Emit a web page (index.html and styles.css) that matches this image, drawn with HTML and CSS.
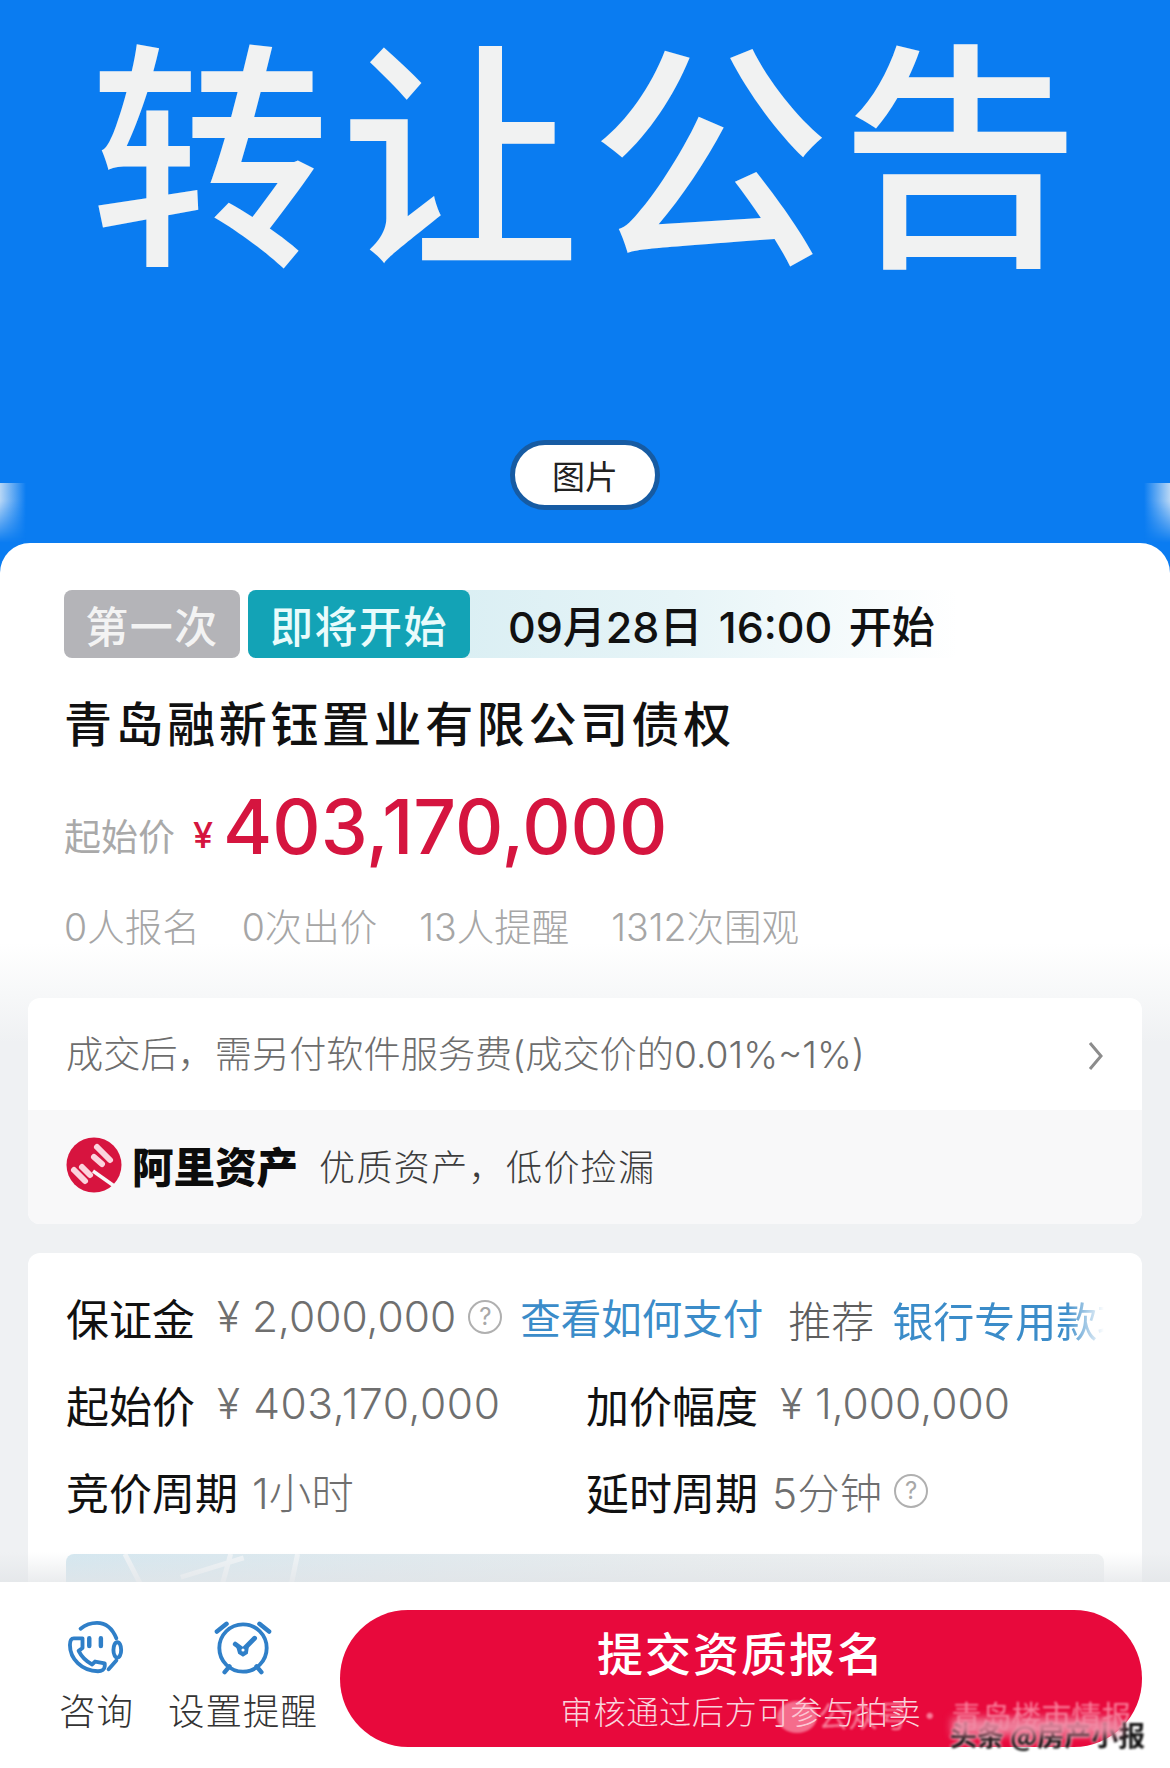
FILE: index.html
```html
<!DOCTYPE html>
<html lang="zh">
<head>
<meta charset="utf-8">
<title>转让公告</title>
<link rel="stylesheet" href="styles.css">
</head>
<body>
<div class="page">
  <main class="scroll">
    <header class="hero">
      <h1 class="hero-title"><span>转</span><span>让</span><span>公</span><span>告</span></h1>
      <div class="hero-pill">图片</div>
    </header>
    <section class="card">
      <div class="summary">
        <div class="tags">
          <span class="tag tag-grey">第一次</span>
          <div class="tag-strip">
            <span class="tag tag-teal">即将开始</span>
            <span class="tag-date">09月28日 16:00 开始</span>
          </div>
        </div>
        <h2 class="asset-title">青岛融新钰置业有限公司债权</h2>
        <div class="price-row">
          <span class="price-label">起始价</span>
          <span class="price-yen">¥</span>
          <span class="price-num">403,170,000</span>
        </div>
        <div class="stats">
          <span>0人报名</span><span>0次出价</span><span>13人提醒</span><span>1312次围观</span>
        </div>
      </div>
      <div class="panel notice">
        <div class="notice-top">
          <span>成交后，需另付软件服务费(成交价的0.01%~1%)</span>
          <svg class="chevron" viewBox="0 0 16 32"><path d="M2 3l11 13L2 29"/></svg>
        </div>
        <div class="notice-bottom">
          <svg class="ali-logo" viewBox="0 0 56 56">
            <circle cx="28" cy="28" r="27.5" fill="#d7143f"/>
            <g class="ali-bars">
              <path d="M31 10l13 13"/><path d="M28 20l8 7"/><path d="M16 30l8 8"/><path d="M8 33l11 11"/>
            </g>
            <path d="M27 34l24 17" class="ali-line"/>
          </svg>
          <strong class="ali-name">阿里资产</strong>
          <span class="ali-slogan">优质资产，低价捡漏</span>
        </div>
      </div>
      <div class="panel rules">
        <div class="rule-row">
          <span class="k">保证金</span>
          <span class="v yen-gap">¥ 2,000,000</span>
          <span class="qmark">?</span>
          <span class="link">查看如何支付</span>
          <span class="rec">推荐</span>
          <span class="link bank">银行专用款项</span>
        </div>
        <div class="rule-row">
          <div class="col col-a"><span class="k">起始价</span><span class="v yen-gap wide">¥ 403,170,000</span></div>
          <div class="col"><span class="k">加价幅度</span><span class="v yen-gap">¥ 1,000,000</span></div>
        </div>
        <div class="rule-row">
          <div class="col col-a"><span class="k">竞价周期</span><span class="v">1小时</span></div>
          <div class="col"><span class="k">延时周期</span><span class="v">5分钟</span><span class="qmark">?</span></div>
        </div>
        <div class="map">
          <svg class="map-roads" viewBox="0 0 1040 30" preserveAspectRatio="none">
            <path d="M59 0l15 30M115 24L178 4M165 0l-8 30M232 0l-6 30"/>
          </svg>
        </div>
      </div>
    </section>
  </main>
  <footer class="bar">
    <div class="bar-item">
      <svg class="bar-icon" viewBox="0 0 60 60">
        <path d="M15 20H6C3 20 2 23 2 27C2 41 14 54 31 54C35 54 38 52 38 49V46L28 44L25 47C19 44 14 39 11 33L15 30Z"/>
        <path d="M13 10C18 6 24 4 30 4C39 4 46 10 50 20"/>
        <ellipse cx="51" cy="32" rx="4" ry="8"/>
        <path d="M50 43L42 52"/>
        <path class="eyes" d="M22 20v8M34 20v8"/>
      </svg>
      <span>咨询</span>
    </div>
    <div class="bar-item">
      <svg class="bar-icon" viewBox="0 0 60 60">
        <circle cx="30" cy="30" r="24.5"/>
        <path class="eyes" d="M3 13l10-8M57 13L47 5M11 55l5-6M49 55l-5-6"/>
        <path class="hand" d="M22 26l8 6 12-12"/>
        <path class="hand-fill" d="M23 29l7 3 6-3-1 7-5 3-5-3z"/>
        <circle class="hand-dot" cx="30" cy="32" r="1.6"/>
      </svg>
      <span>设置提醒</span>
    </div>
    <button class="cta">
      <span class="cta-main">提交资质报名</span>
      <span class="cta-sub">审核通过后方可参与拍卖</span>
      <span class="wm-bubble"></span>
      <span class="wm wm-a">公众号 · 青岛楼市情报</span>
      <span class="wm wm-b">头条 @房产小报</span>
      <span class="wm-smear"></span>
    </button>
  </footer>
</div>
</body>
</html>
```
FILE: styles.css
```css
* { box-sizing: border-box; }
html, body { margin: 0; padding: 0; }
body {
  width: 1170px;
  height: 1768px;
  overflow: hidden;
  background: #fff;
  font-family: Inter, "Noto Sans CJK SC", sans-serif;
}
.page { width: 1170px; height: 1768px; display: flex; flex-direction: column; }
.scroll { height: 1582px; overflow: hidden; flex: none; }

.hero {
  position: relative;
  height: 573px;
  margin-bottom: -30px;
  background: #0a7cf1;
  display: flex;
  flex-direction: column;
  align-items: center;
  padding-top: 3px;
}
.hero::before, .hero::after {
  content: "";
  position: absolute;
  top: 483px;
  height: 60px;
  width: 26px;
  -webkit-mask-image: linear-gradient(180deg, #000 30%, transparent 100%);
  mask-image: linear-gradient(180deg, #000 30%, transparent 100%);
}
.hero::before { left: 0; background: linear-gradient(90deg, #b7d6f5, #0a7cf1); }
.hero::after { right: 0; background: linear-gradient(270deg, #b7d6f5, #0a7cf1); }
.hero-title {
  margin: 0;
  width: 990px;
  height: 293px;
  display: flex;
  justify-content: space-between;
  font-family: "Noto Sans CJK SC", sans-serif;
  font-weight: 500;
  font-size: 240px;
  line-height: 280px;
  color: #f1f2f2;
}
.hero-title span { display: block; width: 240px; }
.hero-pill {
  margin-top: 144px;
  width: 150px;
  height: 70px;
  border: 5px solid #165ba3;
  border-radius: 35px;
  background: #fff;
  color: #222;
  font-family: "Noto Sans CJK SC", sans-serif;
  font-size: 33px;
  line-height: 60px;
  text-align: center;
}

.card {
  position: relative;
  height: 1039px;
  border-radius: 30px 30px 0 0;
  background: linear-gradient(180deg, #fff 0, #fff 400px, #eff1f3 500px, #eff1f3 100%);
  padding: 47px 28px 0;
}
.summary { padding: 0 36px; height: 408px; }
.tags { display: flex; gap: 8px; height: 68px; }
.tag {
  display: flex;
  align-items: center;
  justify-content: center;
  height: 68px;
  border-radius: 8px;
  color: #e9fbfb;
  font-size: 43px;
  font-weight: 500;
  letter-spacing: 1.5px;
  font-family: "Noto Sans CJK SC", sans-serif;
}
.tag-grey { width: 176px; background: #b4b4b8; color: #f3f3f3; }
.tag-strip {
  display: flex;
  align-items: center;
  width: 710px;
  height: 68px;
  background: linear-gradient(90deg, #cfeaf0 0, #e6f4f7 60%, #fff 100%);
  border-radius: 8px;
}
.tag-teal { width: 222px; background: #13a3b6; flex: none; }
.tag-date {
  margin-left: 38px;
  font-size: 43px;
  font-weight: 500;
  color: #111;
  white-space: nowrap;
  word-spacing: 5px;
}
.asset-title {
  margin: 28px 0 0;
  font-size: 48px;
  font-weight: 500;
  line-height: 70px;
  letter-spacing: 3.6px;
  color: #111;
  font-family: "Noto Sans CJK SC", sans-serif;
}
.price-row { display: flex; align-items: flex-end; height: 100px; margin-top: 21px; }
.price-label { margin-bottom: 17px; font-size: 37px; line-height: 50px; color: #a9a9a9; font-family: "Noto Sans CJK SC", sans-serif; }
.price-yen { margin: 0 0 17px 18px; font-size: 36px; line-height: 50px; font-weight: 500; color: #d5153f; }
.price-num { margin-left: 10px; font-size: 75px; line-height: 100px; font-weight: 500; color: #d5153f; }
.stats {
  display: flex;
  gap: 42px;
  margin-top: 20px;
  font-size: 37.5px;
  font-weight: 300;
  color: #a6a6a6;
}

.panel { border-radius: 12px; background: #fff; overflow: hidden; }
.notice { height: 226px; }
.notice-top {
  height: 112px;
  padding: 0 38px 4px;
  display: flex;
  align-items: center;
  justify-content: space-between;
  font-size: 37.2px;
  font-weight: 300;
  color: #6d6d6d;
  white-space: nowrap;
}
.chevron { width: 16px; height: 32px; margin-top: 7px; fill: none; stroke: #8c8c8c; stroke-width: 3; }
.notice-bottom {
  height: 114px;
  padding: 0 0 4px 38px;
  background: #f8f8f9;
  display: flex;
  align-items: center;
}
.ali-logo { width: 56px; height: 56px; flex: none; }
.ali-bars path { stroke: #fbd3dd; stroke-width: 6; stroke-linecap: round; fill: none; }
.ali-line { stroke: #f8f8f9; stroke-width: 3.5; fill: none; }
.ali-name {
  margin-left: 10px;
  font-size: 41.5px;
  font-weight: 900;
  color: #0c0c0c;
  font-family: "Noto Sans CJK SC", sans-serif;
}
.ali-slogan {
  margin-left: 21px;
  font-size: 36px;
  color: #3d3d3d;
  font-family: "Noto Sans CJK SC", sans-serif;
  font-weight: 300;
  letter-spacing: 1.4px;
}

.rules { margin-top: 29px; height: 400px; padding: 20px 38px 0; }
.rule-row {
  display: flex;
  align-items: center;
  height: 87px;
  white-space: nowrap;
  overflow: hidden;
}
.col { display: flex; align-items: center; }
.col-a { width: 520px; flex: none; }
.k { font-size: 43px; color: #111; font-family: "Noto Sans CJK SC", sans-serif; font-weight: 400; }
.v { margin-left: 14px; font-size: 42.5px; font-weight: 300; color: #6f6f6f; }
.wide { letter-spacing: 0.6px; }
.yen-gap { margin-left: 22px; }
.qmark {
  margin-left: 12px;
  width: 34px;
  height: 34px;
  border: 2px solid #b0b0b0;
  border-radius: 50%;
  color: #a8a8a8;
  font-size: 24px;
  line-height: 30px;
  text-align: center;
  flex: none;
}
.link { margin-left: 18px; font-size: 40.5px; font-weight: 400; color: #3b8cc9; font-family: "Noto Sans CJK SC", sans-serif; }
.rec { margin-left: 25px; font-size: 43px; line-height: 60px; padding-top: 5px; font-weight: 300; color: #5e5e5e; font-family: "Noto Sans CJK SC", sans-serif; }
.bank {
  margin-left: 18px;
  font-size: 41px;
  line-height: 60px;
  padding-top: 5px;
  flex: 1;
  overflow: hidden;
  -webkit-mask-image: linear-gradient(90deg, #000 82%, transparent 100%);
  mask-image: linear-gradient(90deg, #000 82%, transparent 100%);
}
.map {
  margin-top: 20px;
  height: 60px;
  border-radius: 8px 8px 0 0;
  background: linear-gradient(90deg, #d4e7f0 0, #dfe9ee 30%, #e9edef 60%, #f0f2f3 100%);
}
.map-roads { display: block; width: 100%; height: 29px; fill: none; stroke: #eef3f6; stroke-width: 5; }

.bar {
  flex: 1;
  display: flex;
  background: #fff;
  padding: 28px 28px 21px 59px;
  position: relative;
}
.bar::before {
  content: "";
  position: absolute;
  left: 0;
  right: 0;
  top: -30px;
  height: 30px;
  background: linear-gradient(180deg, rgba(225,228,231,0), rgba(225,228,231,.7));
}
.bar-item {
  display: flex;
  flex-direction: column;
  align-items: center;
  margin-right: 34px;
  font-size: 36.5px;
  color: #333;
  font-family: "Noto Sans CJK SC", sans-serif;
  font-weight: 300;
  letter-spacing: 1px;
  white-space: nowrap;
}
.bar-item + .bar-item { margin-right: 0; }
.bar-item span { margin-top: 7px; line-height: 52px; }
.bar-icon { width: 58px; height: 58px; margin-top: 9px; fill: none; stroke: #2f7fc8; stroke-width: 4; stroke-linecap: round; stroke-linejoin: round; }
.eyes { stroke-width: 4.6; }
.hand { stroke-width: 5; stroke-linecap: round; }
.hand-fill { fill: #2f7fc8; stroke: none; }
.hand-dot { fill: #fff; stroke: none; }
.cta {
  position: relative;
  flex: none;
  margin-left: auto;
  width: 802px;
  height: 137px;
  padding: 0;
  border: 0;
  border-radius: 68px;
  background: #e8093c;
  color: #fff;
  display: flex;
  flex-direction: column;
  align-items: center;
  font-family: "Noto Sans CJK SC", sans-serif;
  overflow: visible;
}
.cta-main { margin-top: 8px; font-size: 46px; font-weight: 500; letter-spacing: 2px; line-height: 66px; }
.cta-sub { font-size: 32.3px; color: #f9d3dc; line-height: 52px; font-weight: 300; letter-spacing: 0.5px; }
.wm-bubble {
  position: absolute;
  left: 437px;
  top: 91px;
  width: 40px;
  height: 32px;
  border-radius: 50%;
  background: rgba(255,190,205,.55);
  filter: blur(1px);
}
.wm {
  position: absolute;
  white-space: nowrap;
}
.wm-a { left: 478px; top: 82px; font-size: 30px; color: rgba(255,165,185,.75); filter: blur(1px); }
.wm-smear {
  position: absolute;
  left: 612px;
  top: 108px;
  width: 170px;
  height: 17px;
  background: rgba(240,140,165,.9);
  filter: blur(4px);
}
.wm-b { left: 610px; top: 105px; font-size: 27px; color: #111; font-weight: 700; text-shadow: 0 0 3px #fff, 0 0 3px #fff; filter: blur(1px); }
```
